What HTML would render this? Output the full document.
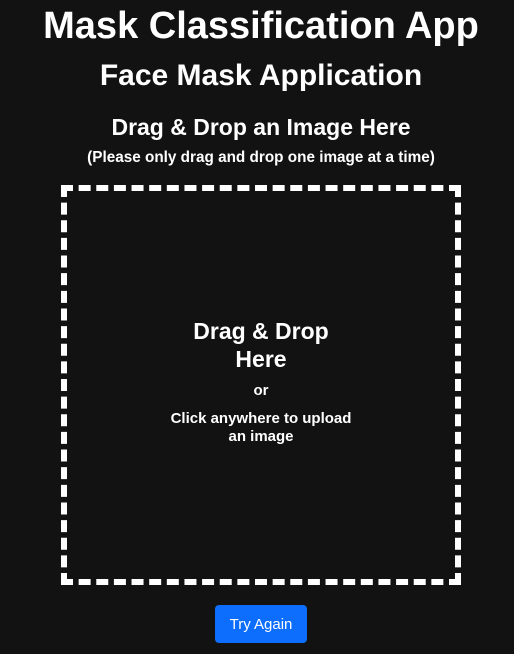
<!DOCTYPE html>
<html><head><style>
html,body{margin:0;padding:0;background:#121212;width:514px;height:654px;overflow:hidden;color:#fff;font-family:"Liberation Sans",Arial,sans-serif;}
.t{position:absolute;left:0;width:522px;text-align:center;white-space:nowrap;}
.box{position:absolute;left:61px;top:185px;width:388px;height:388px;border:6px dashed #fff;}
.btn{position:absolute;left:215px;top:605px;width:92px;height:38px;background:#0d6efd;border-radius:4px;color:#fff;font-size:15px;line-height:39px;text-align:center;}
</style></head><body>
<div class="t" style="top:3px;font-size:38px;font-weight:bold;line-height:46px;">Mask Classification App</div>
<div class="t" style="top:57px;font-size:30px;font-weight:bold;line-height:38px;">Face Mask Application</div>
<div class="t" style="top:113px;font-size:23px;font-weight:bold;line-height:28px;">Drag &amp; Drop an Image Here</div>
<div class="t" style="top:149px;font-size:15.3px;font-weight:bold;line-height:18px;">(Please only drag and drop one image at a time)</div>
<div class="box"></div>
<div class="t" style="top:317px;font-size:23px;font-weight:bold;line-height:28px;">Drag &amp; Drop<br>Here</div>
<div class="t" style="top:382px;font-size:15px;font-weight:bold;line-height:18px;">or</div>
<div class="t" style="top:410px;font-size:15px;font-weight:bold;line-height:18px;">Click anywhere to upload<br>an image</div>
<div class="btn">Try Again</div>
</body></html>
